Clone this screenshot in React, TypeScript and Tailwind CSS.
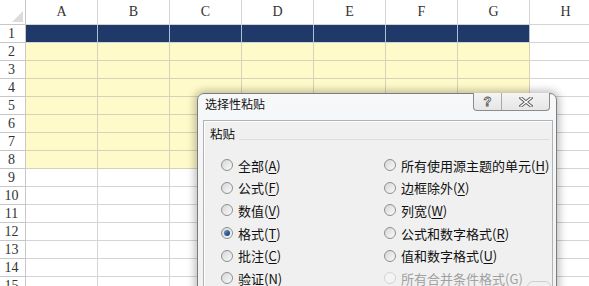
import React from "react";

const COLS = ["A", "B", "C", "D", "E", "F", "G", "H"];
const ROWS = Array.from({ length: 15 }, (_, i) => i + 1);

const LEFT = [
  { label: "全部", key: "A" },
  { label: "公式", key: "F" },
  { label: "数值", key: "V" },
  { label: "格式", key: "T", checked: true },
  { label: "批注", key: "C" },
  { label: "验证", key: "N" },
];

const RIGHT = [
  { label: "所有使用源主题的单元", key: "H" },
  { label: "边框除外", key: "X" },
  { label: "列宽", key: "W" },
  { label: "公式和数字格式", key: "R" },
  { label: "值和数字格式", key: "U" },
  { label: "所有合并条件格式", key: "G", disabled: true },
];

function cellClass(row: number, col: number) {
  if (col < 7 && row === 1) return "bg-[#1f3a68] border-r border-b border-r-[#aebfd8] border-b-[#d4d4d4]";
  if (col < 7 && row <= 8) return "bg-[#fffac9] border-r border-b border-[#d6d3b4]";
  return "bg-white border-r border-b border-[#d4d4d4]";
}

function Radio({ checked, disabled }: { checked?: boolean; disabled?: boolean }) {
  return (
    <span
      className={`flex items-center justify-center w-[12px] h-[12px] rounded-full border shrink-0 ${
        disabled
          ? "border-[#d4d4d4] bg-[#f4f4f4]"
          : "border-[#8e8f8f] bg-gradient-to-br from-[#d6d6d6] to-[#fbfbfb]"
      }`}
    >
      {checked && <span className="w-[6px] h-[6px] rounded-full bg-gradient-to-br from-[#6d9fd4] to-[#0f2f63]" />}
    </span>
  );
}

function Option({ label, k, checked, disabled }: { label: string; k: string; checked?: boolean; disabled?: boolean }) {
  return (
    <div className="flex items-center gap-[5px] h-[22.6px]">
      <Radio checked={checked} disabled={disabled} />
      <span className={`text-[13px] leading-none whitespace-nowrap ${disabled ? "text-[#a0a0a0]" : "text-[#111]"}`}>
        {label}(
        {disabled ? k : <span className="underline underline-offset-2">{k}</span>})
      </span>
    </div>
  );
}

export default function App() {
  return (
    <div className="relative w-[589px] h-[286px] overflow-hidden bg-white">
      {/* spreadsheet */}
      <div className="grid grid-cols-[26px_repeat(8,72px)] grid-rows-[25px_repeat(15,18px)] w-[602px] font-['Liberation_Serif',serif] text-[14px] text-[#333]">
        <div className="relative border-r border-b border-[#c8c8c8] bg-white">
          <svg className="absolute right-[2px] bottom-[2px]" width="11" height="11" viewBox="0 0 11 11">
            <polygon points="11,0 11,11 0,11" fill="#dcdcdc" />
          </svg>
        </div>
        {COLS.map((c) => (
          <div key={c} className="flex items-end justify-center pb-[2px] border-r border-b border-[#d4d4d4] bg-white">
            {c}
          </div>
        ))}
        {ROWS.map((r) => (
          <React.Fragment key={r}>
            <div className="flex items-center justify-center pr-[2px] border-r border-b border-[#c8c8c8] bg-white leading-none">
              {r}
            </div>
            {COLS.map((c, ci) => (
              <div key={c} className={cellClass(r, ci)} />
            ))}
          </React.Fragment>
        ))}
      </div>

      {/* paste special dialog */}
      <div className="absolute left-[197px] top-[93px] w-[360px] h-[220px] rounded-t-[7px] border border-[#7d7d7d] bg-gradient-to-b from-[#f7f8f9] to-[#eef0f2] shadow-[0_0_8px_2px_rgba(0,0,0,0.28)] font-['Noto_Sans_CJK_SC',sans-serif]">
        <div className="flex h-[25px]">
          <div className="pl-[7px] pt-[4px] text-[12px] text-[#111] leading-none">选择性粘贴</div>
          <div className="ml-auto mr-[6px] flex h-[18px] -mt-px border border-t-0 border-[#8c8c8c] rounded-b-[4px] bg-gradient-to-b from-[#f4f4f4] to-[#e6e6e6]">
            <div className="flex items-center justify-center w-[28px] border-r border-[#a9a9a9] font-['Liberation_Sans',sans-serif] font-bold text-[13px] text-white [-webkit-text-stroke:0.8px_#555] leading-none">
              ?
            </div>
            <div className="flex items-center justify-center w-[47px]">
              <svg width="14" height="10" viewBox="0 0 14 10">
                <path d="M2 1 L12 9 M12 1 L2 9" stroke="#5a5a5a" strokeWidth="3.2" strokeLinecap="square" />
                <path d="M2 1 L12 9 M12 1 L2 9" stroke="#ffffff" strokeWidth="1.4" strokeLinecap="square" />
              </svg>
            </div>
          </div>
        </div>
        <div className="mt-px ml-[5px] w-[350px] h-[200px] border border-[#b2b2b2] bg-[#f0f0f0] shadow-[inset_1px_1px_0_#ffffff]">
          <div className="flex items-center gap-[4px] pl-[6px] pt-[4px] h-[22px]">
            <span className="text-[12.5px] text-[#111] leading-none">粘贴</span>
            <span className="flex-1 mr-[3px] mt-[10px] h-px bg-[#d5dfe5]" />
          </div>
          <div className="grid grid-cols-[163px_1fr] pl-[17px] pt-[11px]">
            <div className="flex flex-col">
              {LEFT.map((o) => (
                <Option key={o.key} label={o.label} k={o.key} checked={o.checked} />
              ))}
            </div>
            <div className="flex flex-col">
              {RIGHT.map((o) => (
                <Option key={o.key} label={o.label} k={o.key} disabled={o.disabled} />
              ))}
            </div>
          </div>
        </div>
      </div>

      {/* faint watermark arc */}
      <div className="absolute left-[527px] top-[281px] w-[24px] h-[12px] rounded-full border border-[#cfcfcf]" />
    </div>
  );
}
